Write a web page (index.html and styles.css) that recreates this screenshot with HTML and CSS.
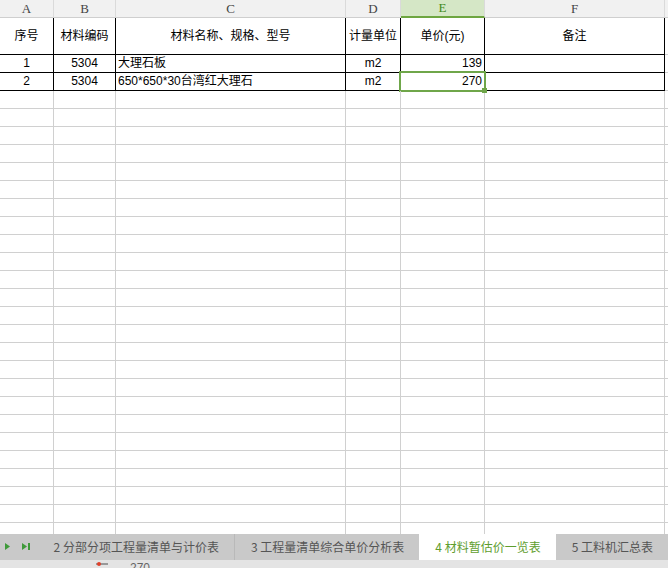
FILE: index.html
```html
<!DOCTYPE html>
<html lang="zh">
<head>
  <meta charset="UTF-8">
  <title>材料暂估价一览表</title>
  <link rel="stylesheet" href="styles.css">
</head>
<body>

  <!-- Grid -->
  <div class="sheet" id="sheet">
    <div class="row col-head">
      <div class="cell">A</div>
      <div class="cell">B</div>
      <div class="cell">C</div>
      <div class="cell">D</div>
      <div class="cell picked">E</div>
      <div class="cell">F</div>
      <div class="cell"></div>
    </div>

    <div class="row head tall">
      <div class="cell center">序号</div>
      <div class="cell center">材料编码</div>
      <div class="cell center">材料名称、规格、型号</div>
      <div class="cell center">计量单位</div>
      <div class="cell center">单价(元)</div>
      <div class="cell center">备注</div>
      <div class="cell plain"></div>
    </div>

    <div class="row head">
      <div class="cell center">1</div>
      <div class="cell center">5304</div>
      <div class="cell">大理石板</div>
      <div class="cell center">m2</div>
      <div class="cell right">139</div>
      <div class="cell"></div>
      <div class="cell plain"></div>
    </div>

    <div class="row head">
      <div class="cell center">2</div>
      <div class="cell center">5304</div>
      <div class="cell">650*650*30台湾红大理石</div>
      <div class="cell center">m2</div>
      <div class="cell right active">270<span class="handle"></span></div>
      <div class="cell"></div>
      <div class="cell plain"></div>
    </div>
  </div>

  <!-- Sheet tabs -->
  <div class="tabs">
    <div class="nav">
      <svg width="34" height="26" viewBox="0 0 34 26">
        <path d="M5 9 L10 12.5 L5 16 Z" fill="#3f9a3a"/>
        <path d="M22 9 L27 12.5 L22 16 Z" fill="#3f9a3a"/>
        <rect x="28" y="9" width="2" height="7" fill="#3f9a3a"/>
      </svg>
    </div>
    <div class="tab sep">2 分部分项工程量清单与计价表</div>
    <div class="tab">3 工程量清单综合单价分析表</div>
    <div class="tab current">4 材料暂估价一览表</div>
    <div class="tab">5 工料机汇总表</div>
  </div>

  <div class="status">
    <span class="status-icon"></span>
    <span class="status-val">270</span>
  </div>

  <script>
    // fill the empty rows under the table
    const sheet = document.getElementById('sheet');
    for (let r = 0; r < 25; r++) {
      const row = document.createElement('div');
      row.className = 'row';
      for (let c = 0; c < 7; c++) {
        const cell = document.createElement('div');
        cell.className = 'cell';
        row.appendChild(cell);
      }
      sheet.appendChild(row);
    }
  </script>
</body>
</html>
```

FILE: styles.css
```css
* {
  margin: 0;
  padding: 0;
  box-sizing: border-box;
}

body {
  width: 668px;
  height: 568px;
  overflow: hidden;
  background-color: #fff;
  font-family: 'Liberation Sans', 'Noto Sans CJK SC', sans-serif;
  font-size: 12px;
  color: #000;
}

.sheet {
  height: 534px;
  overflow: hidden;
}

.row {
  display: grid;
  grid-template-columns: 54px 62px 230px 55px 84px 180px 1fr;
  height: 18px;
}

.row.tall {
  height: 37px;
}

.cell {
  border-right: 1px solid #d0d0d0;
  border-bottom: 1px solid #d0d0d0;
  line-height: 17px;
  padding: 0 2px;
  white-space: nowrap;
  overflow: visible;
  position: relative;
}

.tall .cell {
  line-height: 36px;
}

.center {
  text-align: center;
}

.right {
  text-align: right;
}

/* column letters */
.col-head .cell {
  background-color: #f1f1f1;
  border-right-color: #dadada;
  border-bottom-color: #cfcfcf;
  font-family: 'Liberation Serif', serif;
  font-size: 13px;
  color: #444;
  text-align: center;
}

.col-head .cell.picked {
  background-color: #d5e7c6;
  border-bottom: 2px solid #6ea640;
  color: #3f8a1c;
  line-height: 16px;
}

/* bordered table */
.head .cell {
  border-color: #000;
}

.head .cell.plain {
  border-right-color: #d0d0d0;
  border-bottom-color: #d0d0d0;
}

.active::after {
  content: '';
  position: absolute;
  top: -2px;
  left: -2px;
  right: -2px;
  bottom: -2px;
  border: 2px solid #6fa64a;
}

.handle {
  position: absolute;
  right: -3px;
  bottom: -3px;
  width: 5px;
  height: 5px;
  background-color: #6fa64a;
  z-index: 2;
}

/* tabs */
.tabs {
  display: flex;
  height: 26px;
  background-color: #c9c9c9;
  font-family: 'Noto Sans CJK SC', sans-serif;
  font-size: 12px;
  color: #555;
}

.nav {
  width: 40px;
}

.nav svg {
  display: block;
}

.tab {
  padding: 0 15px 0 16px;
  line-height: 26px;
  white-space: nowrap;
}

.tab.sep {
  border-right: 1px solid #b9b9b9;
}

.tab.current {
  background-color: #fff;
  color: #5f9e2e;
}

.status {
  height: 8px;
  background-color: #e4e4e4;
  position: relative;
  overflow: hidden;
  font-family: 'Liberation Sans', sans-serif;
  font-size: 12px;
  color: #666;
}

.status-icon {
  position: absolute;
  left: 96px;
  top: 3px;
  width: 12px;
  height: 6px;
  border-top: 2px solid #999;
}

.status-icon::before {
  content: '';
  position: absolute;
  left: 1px;
  top: -3px;
  width: 4px;
  height: 4px;
  border-radius: 50%;
  background-color: #e0402a;
}

.status-val {
  position: absolute;
  left: 130px;
  top: 2px;
  line-height: 12px;
}
```
